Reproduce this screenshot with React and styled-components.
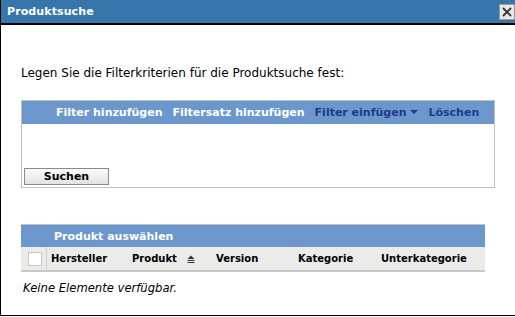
import React from "react";
import styled, { createGlobalStyle } from "styled-components";

const Global = createGlobalStyle`
  html, body { margin: 0; padding: 0; background: #fff; }
  body { font-family: "DejaVu Sans", Verdana, sans-serif; font-size: 12px; color: #000; }
`;

const Dialog = styled.div`
  width: 514px;
  height: 315px;
  border-left: 1px solid #000;
  border-bottom: 1px solid #000;
  display: flex;
  flex-direction: column;
  background: #fff;
`;

const TitleBar = styled.div`
  height: 23px;
  background: #3676ab;
  border-bottom: 2px solid #000;
  display: flex;
  align-items: center;
  justify-content: space-between;
  padding: 0 0 0 6px;
`;

const Title = styled.div`
  color: #fff;
  font-weight: bold;
  font-size: 11px;
  letter-spacing: 0.1px;
`;

const CloseBtn = styled.div`
  width: 14px;
  height: 14px;
  border: 1px solid #9a9a9a;
  background: #e8e8e8;
  display: flex;
  align-items: center;
  justify-content: center;
`;

const Body = styled.div`
  padding: 41px 20px 0 20px;
  display: flex;
  flex-direction: column;
`;

const Intro = styled.div`
  font-size: 12px;
  line-height: 15px;
`;

const FilterBox = styled.div`
  margin-top: 19px;
  width: 472px;
  border: 1px solid #c0c0c0;
  height: 86px;
  display: flex;
  flex-direction: column;
`;

const BlueHeader = styled.div`
  height: ${(p) => p.$h}px;
  background: #6b97cd;
  display: flex;
  align-items: center;
  padding-left: ${(p) => p.$pad}px;
  gap: 10px;
  font-weight: bold;
  font-size: 11px;
  white-space: nowrap;
`;

const HeaderLink = styled.span`
  color: ${(p) => (p.$dark ? "#1c3c8c" : "#fff")};
  display: inline-flex;
  align-items: center;
  gap: 4px;
`;

const FilterArea = styled.div`
  flex: 1;
  display: flex;
  align-items: flex-end;
  padding: 0 0 2px 2px;
`;

const Button = styled.button`
  width: 85px;
  height: 17px;
  padding: 0;
  border: 1px solid #8a8a8a;
  background: linear-gradient(#fbfbfb, #e2e2e2);
  font-family: "DejaVu Sans", Verdana, sans-serif;
  font-weight: bold;
  font-size: 11px;
  color: #000;
  line-height: 15px;
`;

const Table = styled.div`
  margin-top: 36px;
  width: 464px;
  display: flex;
  flex-direction: column;
`;

const TableHead = styled(BlueHeader)`
  border-top: 1px solid #b8c4d4;
`;

const ColRow = styled.div`
  height: 23px;
  background: #ebebea;
  border-bottom: 2px solid #c8c8c8;
  display: flex;
  align-items: center;
  font-weight: bold;
  font-size: 10px;
`;

const CheckCell = styled.div`
  width: 26px;
  height: 100%;
  border-right: 1px solid #cfcfcf;
  display: flex;
  align-items: center;
  padding-left: 7px;
  box-sizing: border-box;
`;

const Check = styled.div`
  width: 12px;
  height: 12px;
  background: #fff;
  border: 1px solid #c8c8c0;
`;

const Col = styled.div`
  width: ${(p) => p.$w}px;
  padding-left: ${(p) => p.$pl || 0}px;
  display: flex;
  align-items: center;
  gap: 10px;
  white-space: nowrap;
`;

const Empty = styled.div`
  font-style: italic;
  font-size: 11.6px;
  padding: 9px 0 0 2px;
`;

export default function App() {
  return (
    <>
      <Global />
      <Dialog>
        <TitleBar>
          <Title>Produktsuche</Title>
          <CloseBtn>
            <svg width="10" height="10" viewBox="0 0 10 10">
              <path d="M1 1 L9 9 M9 1 L1 9" stroke="#333" strokeWidth="1.8" />
            </svg>
          </CloseBtn>
        </TitleBar>
        <Body>
          <Intro>Legen Sie die Filterkriterien für die Produktsuche fest:</Intro>
          <FilterBox>
            <BlueHeader $h={23} $pad={34}>
              <HeaderLink>Filter hinzufügen</HeaderLink>
              <HeaderLink>Filtersatz hinzufügen</HeaderLink>
              <HeaderLink $dark>
                Filter einfügen
                <svg width="8" height="5" viewBox="0 0 8 5">
                  <path d="M0 0 H8 L4 4 Z" fill="#1c3c8c" />
                </svg>
              </HeaderLink>
              <HeaderLink $dark>Löschen</HeaderLink>
            </BlueHeader>
            <FilterArea>
              <Button>Suchen</Button>
            </FilterArea>
          </FilterBox>
          <Table>
            <TableHead $h={22} $pad={33}>
              <HeaderLink>Produkt auswählen</HeaderLink>
            </TableHead>
            <ColRow>
              <CheckCell>
                <Check />
              </CheckCell>
              <Col $w={81} $pl={4}>Hersteller</Col>
              <Col $w={84}>
                Produkt
                <svg width="8" height="8" viewBox="0 0 8 8">
                  <path d="M0.5 4 L4 0.5 L7.5 4 Z" fill="#333" />
                  <rect x="0.5" y="5" width="7" height="1" fill="#333" />
                  <rect x="0.5" y="7" width="7" height="1" fill="#333" />
                </svg>
              </Col>
              <Col $w={82}>Version</Col>
              <Col $w={83}>Kategorie</Col>
              <Col $w={90}>Unterkategorie</Col>
            </ColRow>
            <Empty>Keine Elemente verfügbar.</Empty>
          </Table>
        </Body>
      </Dialog>
    </>
  );
}
